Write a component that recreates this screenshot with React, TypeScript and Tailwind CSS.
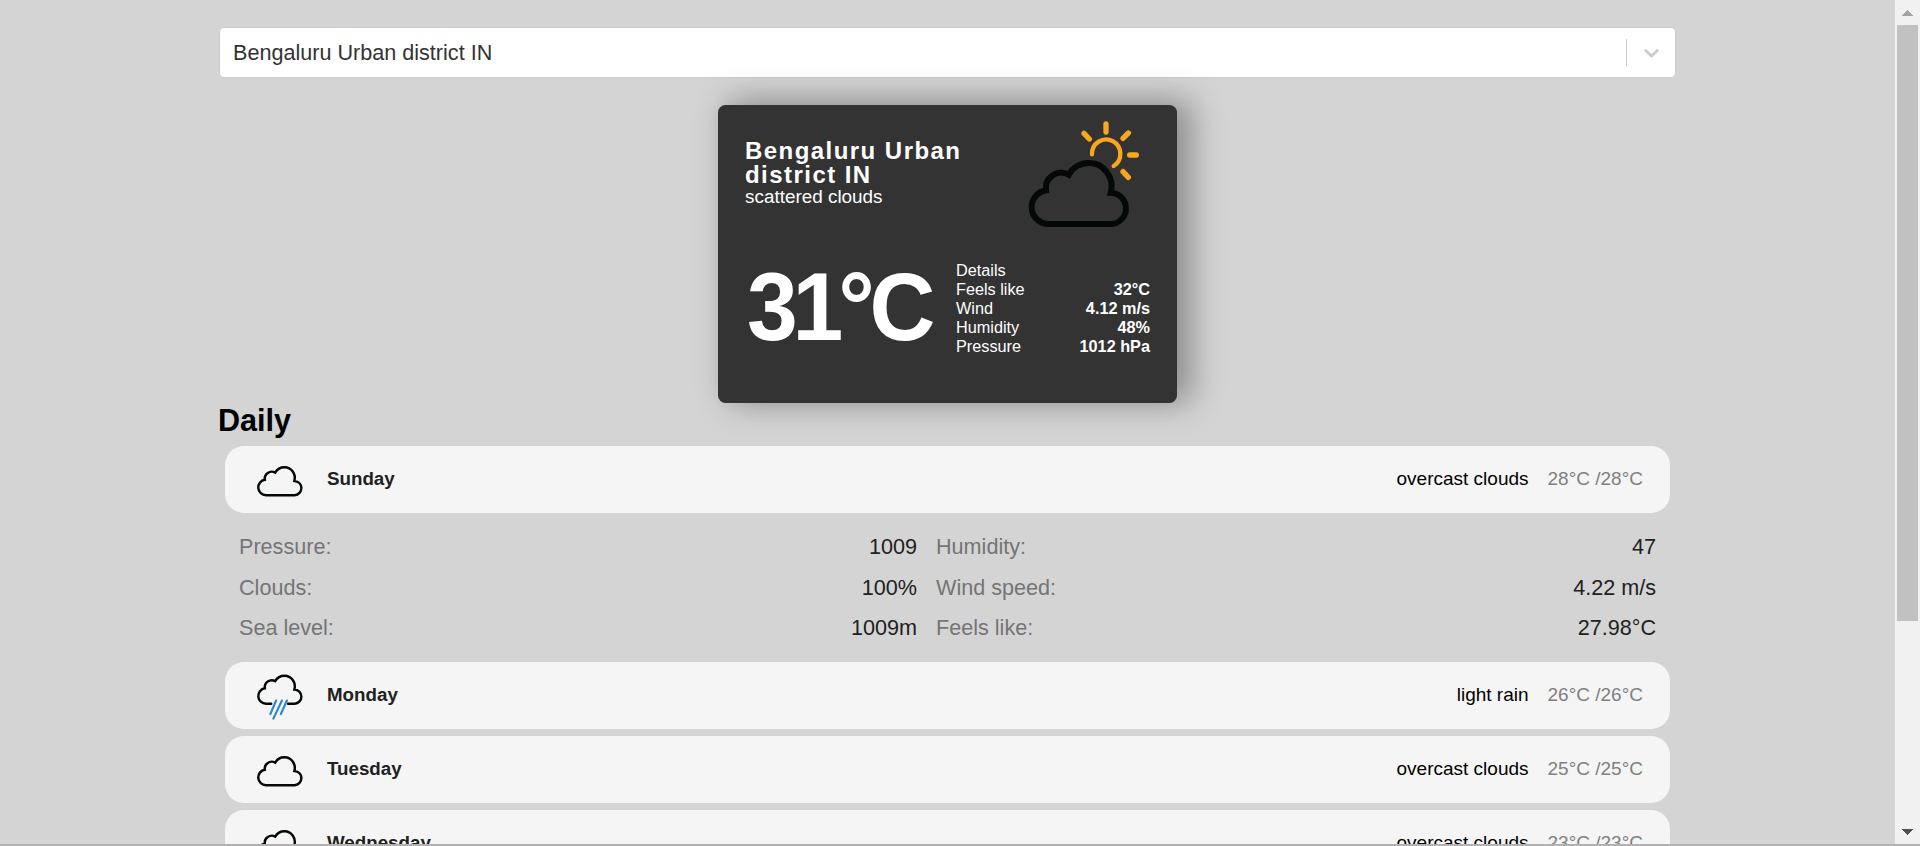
import React from "react";

const CLOUD =
  "M116 342 H304 A46.800 46.800 0 0 0 302 248.500 A67 70 0 0 0 237 159 A70 70 0 0 0 176 194 A46 46 0 0 0 108 241 A50.800 50.800 0 0 0 116 342 Z";
const OPEN_CLOUD =
  "M260 342 H304 A46.800 46.800 0 0 0 302 248.500 A67 70 0 0 0 237 159 A70 70 0 0 0 176 194 A46 46 0 0 0 108 241 A50.800 50.800 0 0 0 116 342 H150";

function CloudIcon() {
  return (
    <svg className="h-12 w-12 shrink-0" viewBox="50 85 315 315" fill="none">
      <path d={CLOUD} stroke="#040808" strokeWidth="16" />
    </svg>
  );
}

function RainIcon() {
  return (
    <svg className="h-12 w-12 shrink-0" viewBox="50 134 315 315" fill="none">
      <path d={OPEN_CLOUD} stroke="#040808" strokeWidth="16" strokeLinecap="round" />
      <path
        d="M182 321 L144 410 M220 321 L164 440 M253 321 L213 410"
        stroke="#2f86c9"
        strokeWidth="14"
        strokeLinecap="round"
      />
    </svg>
  );
}

function ScatteredIcon() {
  return (
    <svg className="h-[130px] w-[150px] shrink-0" viewBox="0 0 450 390" fill="none">
      <path d={CLOUD} stroke="#040808" strokeWidth="18" />
      <path d="M246 133 A42.500 43 0 1 1 311 168" stroke="#f9a71e" strokeWidth="13" strokeLinecap="round" />
      <path
        d="M288 42 V66 M222 70 L238 87 M355 69 L339 85 M359 135 H379 M339 185 L355 202"
        stroke="#f9a71e"
        strokeWidth="16"
        strokeLinecap="round"
      />
    </svg>
  );
}

const details = [
  ["Feels like", "32°C"],
  ["Wind", "4.12 m/s"],
  ["Humidity", "48%"],
  ["Pressure", "1012 hPa"],
];

const sunday = [
  ["Pressure:", "1009", "Humidity:", "47"],
  ["Clouds:", "100%", "Wind speed:", "4.22 m/s"],
  ["Sea level:", "1009m", "Feels like:", "27.98°C"],
];

function DayRow({ day, text, temp, rain }: { day: string; text: string; temp: string; rain?: boolean }) {
  return (
    <div className="mx-[6px] flex h-[67px] shrink-0 items-center rounded-[19px] bg-[#f5f5f5] pr-[27px] pl-[31px] text-[19px]">
      {rain ? <RainIcon /> : <CloudIcon />}
      <span className="ml-[23px] flex-1 text-[18.75px] font-bold text-[#212121]">{day}</span>
      <span className="mr-[19px] text-black">{text}</span>
      <span className="text-[#808080]">{temp}</span>
    </div>
  );
}

export default function App() {
  return (
    <div className="flex h-[846px] w-[1920px] flex-col overflow-hidden bg-[#d4d4d4] font-['Liberation_Sans',Arial,sans-serif]">
      <div className="flex h-[844px] overflow-hidden">
        <main className="flex h-[844px] flex-1 flex-col overflow-hidden pr-[219px] pl-[219px] pt-[27px]">
          <div className="flex h-[51px] shrink-0 items-center rounded-[5px] border border-[#cccccc] bg-white">
            <span className="flex-1 pl-[13px] text-[21.6px] leading-[26px] text-[#333333]">
              Bengaluru Urban district IN
            </span>
            <span className="h-[27px] w-px bg-[#cccccc]" />
            <span className="flex w-12 justify-center">
              <svg className="h-[25px] w-[25px]" viewBox="0 0 20 20" fill="#cccccc">
                <path d="M4.516 7.548c0.436-0.446 1.043-0.481 1.576 0l3.908 3.747 3.908-3.747c0.533-0.481 1.141-0.446 1.574 0 0.436 0.445 0.408 1.197 0 1.615-0.406 0.418-4.695 4.502-4.695 4.502-0.217 0.223-0.502 0.335-0.787 0.335s-0.570-0.112-0.789-0.335c0 0-4.287-4.084-4.695-4.502s-0.436-1.170 0-1.615z" />
              </svg>
            </span>
          </div>

          <section className="mt-[27px] ml-[499px] h-[298px] w-[459px] shrink-0 rounded-[7.5px] bg-[#333333] px-[27px] text-white shadow-[12.5px_-2.5px_32px_2.5px_rgba(0,0,0,0.34)]">
            <div className="flex h-[135px] justify-between">
              <div className="w-[240px] pt-[34px]">
                <p className="text-[24px] leading-[24px] font-bold tracking-[1.45px]">
                  Bengaluru Urban district IN
                </p>
                <p className="text-[18.9px] leading-[19px]">scattered clouds</p>
              </div>
              <div className="-mr-[10px] pt-[5px]">
                <ScatteredIcon />
              </div>
            </div>
            <div className="flex justify-between">
              <p className="w-[190px] origin-left scale-x-[0.94] pt-[12px] pl-[2px] text-[97px] leading-[110px] font-bold tracking-[-5.4px] whitespace-nowrap">
                31°C
              </p>
              <div className="w-[194px] pt-[20.500px] text-[16.25px] leading-[19px]">
                <div>Details</div>
                {details.map(([k, v]) => (
                  <div key={k} className="flex justify-between">
                    <span>{k}</span>
                    <span className="font-bold">{v}</span>
                  </div>
                ))}
              </div>
            </div>
          </section>

          <h2 className="-ml-px h-[43px] shrink-0 text-[30.6px] leading-[34px] font-bold text-black">Daily</h2>
          <DayRow day="Sunday" text="overcast clouds" temp="28°C /28°C" />
          <div className="h-[149px] shrink-0 pt-[14px] pr-[20px] pl-[20px] text-[21.6px] leading-[40.5px]">
            {sunday.map(([a, b, c, d]) => (
              <div key={a} className="flex">
                <div className="flex w-[678px] justify-between">
                  <span className="text-[#757575]">{a}</span>
                  <span className="text-[#212121]">{b}</span>
                </div>
                <div className="ml-[19px] flex flex-1 justify-between">
                  <span className="text-[#757575]">{c}</span>
                  <span className="text-[#212121]">{d}</span>
                </div>
              </div>
            ))}
          </div>
          <div className="flex flex-col gap-[7px]">
            <DayRow day="Monday" text="light rain" temp="26°C /26°C" rain />
            <DayRow day="Tuesday" text="overcast clouds" temp="25°C /25°C" />
            <DayRow day="Wednesday" text="overcast clouds" temp="23°C /23°C" />
          </div>
        </main>

        <aside className="flex w-[25px] shrink-0 flex-col items-center bg-[#f1f1f1]">
          <svg className="h-[25px] w-[25px] shrink-0" viewBox="0 0 25 25" shapeRendering="crispEdges">
            <path d="M7 16 L12.500 10 L18 16 Z" fill="#a3a3a3" />
          </svg>
          <div className="h-[596px] w-[21px] shrink-0 bg-[#c1c1c1]" />
          <div className="flex-1" />
          <svg className="h-[25px] w-[25px] shrink-0" viewBox="0 0 25 25" shapeRendering="crispEdges">
            <path d="M7 10 L12.500 16 L18 10 Z" fill="#505050" />
          </svg>
        </aside>
      </div>
      <div className="h-[2px] bg-[#b3b1b1]" />
    </div>
  );
}
